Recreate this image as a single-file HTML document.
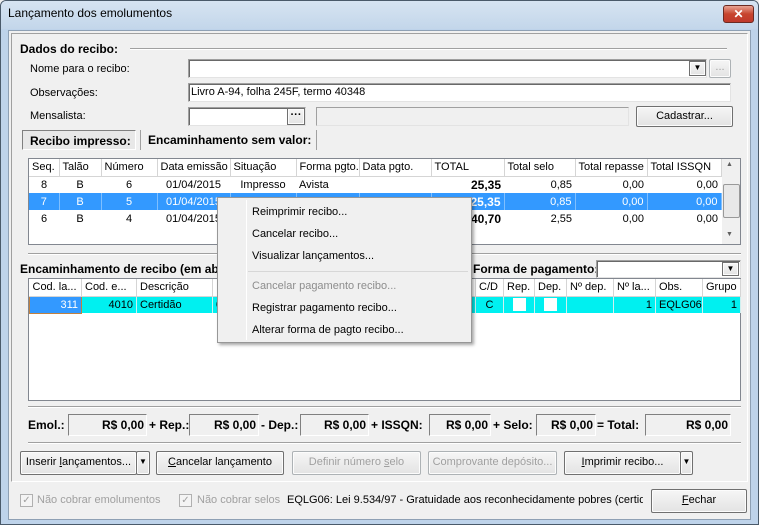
<!DOCTYPE html>
<html><head><meta charset="utf-8"><style>
*{box-sizing:border-box;margin:0;padding:0}
body{width:759px;height:525px;overflow:hidden;font-family:"Liberation Sans",sans-serif;font-size:11px;color:#000;background:#f0f0f0;position:relative}
.a{position:absolute;white-space:nowrap}
.b{font-weight:bold;font-size:12px}
.in{position:absolute;background:#fff;border:1px solid #a0a0a0;border-right-color:#e3e3e3;border-bottom-color:#e3e3e3;box-shadow:inset 1px 1px 0 #696969}
.btn{position:absolute;background:linear-gradient(#f6f6f6,#e3e3e3);border:1px solid #707070;text-align:center;line-height:20px;border-radius:2px;box-shadow:inset 0 0 0 1px #fcfcfc}
.dis{color:#a0a0a0;border-color:#adb2b5}
.tb{position:absolute;background:#f0f0f0;border:1px solid #808080;border-right-color:#fff;border-bottom-color:#fff;text-align:right;font-weight:bold;font-size:12px;padding:3px 2px 0 0}
table{border-collapse:collapse;position:absolute;table-layout:fixed}
td{height:17px;padding:0 3px;overflow:hidden;white-space:nowrap}
.h td{background:#fff;border-right:1px solid #d5d5d5;border-bottom:1px solid #d5d5d5;height:17px}
.r{text-align:right}.c{text-align:center}
.sel td{background:#3399ff;color:#fff;border-right:1px solid #7fbfff}
.cy td{background:#00f0f0;border-right:1px solid #d0f0f0}
.line{position:absolute;height:2px;border-top:1px solid #a0a0a0;border-bottom:1px solid #fff}
.mi{position:absolute;left:34px}
</style></head><body>
<!-- window frame -->
<div class="a" style="left:0;top:0;width:759px;height:525px;border:1px solid #4a5a6a;border-radius:6px 6px 0 0;background:#bed3ea"></div>
<div class="a" style="left:1px;top:1px;width:757px;height:28px;background:linear-gradient(#d6e4f2,#c3d6ea);border-radius:5px 5px 0 0"></div>
<div class="a" style="left:8px;top:6px;font-size:12px">Lançamento dos emolumentos</div>
<div class="a" style="left:723px;top:5px;width:31px;height:18px;border:1px solid #6b2a22;border-radius:3px;background:linear-gradient(#e8a494,#c7452e 50%,#c0392b);color:#fff;font-weight:bold;font-size:12px;text-align:center;line-height:16px">✕</div>
<div class="a" style="left:8px;top:30px;width:743px;height:490px;background:#f0f0f0;border:1px solid #8ea0b4"></div>
<!-- inner panel -->
<div class="a" style="left:11px;top:33px;width:737px;height:449px;border:1px solid #fff;border-left-color:#a0a0a0;border-top-color:#a0a0a0"></div>
<div class="a b" style="left:20px;top:42px">Dados do recibo:</div>
<div class="line" style="left:130px;top:48px;width:597px"></div>
<div class="a" style="left:30px;top:63px">Nome para o recibo:</div>
<div class="in" style="left:188px;top:59px;width:519px;height:19px"></div>
<div class="btn" style="left:689px;top:61px;width:17px;height:15px;line-height:12px;font-size:8px;border-radius:0">▼</div>
<div class="btn dis" style="left:709px;top:59px;width:22px;height:19px;line-height:14px">...</div>
<div class="a" style="left:30px;top:87px">Observações:</div>
<div class="in" style="left:188px;top:83px;width:543px;height:19px"></div>
<div class="a" style="left:191px;top:86px">Livro A-94, folha 245F, termo 40348</div>
<div class="a" style="left:30px;top:110px">Mensalista:</div>
<div class="in" style="left:188px;top:107px;width:118px;height:19px"></div>
<div class="btn" style="left:287px;top:108px;width:18px;height:17px;line-height:12px;border-radius:0;font-weight:bold">···</div>
<div class="in" style="left:316px;top:107px;width:313px;height:19px;background:#f0f0f0;box-shadow:none"></div>
<div class="btn" style="left:636px;top:106px;width:97px;height:21px;line-height:18px">Cadastrar...</div>
<!-- tabs -->
<div class="a b" style="left:22px;top:130px;width:114px;height:20px;border:1px solid #808080;border-right-color:#fff;border-bottom-color:#fff;background:#e8e8e8;padding:3px 0 0 7px">Recibo impresso:</div>
<div class="a" style="left:140px;top:130px;width:1px;height:20px;background:#a0a0a0"></div>
<div class="a b" style="left:148px;top:133px">Encaminhamento sem valor:</div>
<div class="a" style="left:316px;top:130px;width:1px;height:20px;background:#a0a0a0"></div>
<!-- grid1 -->
<div class="a" style="left:28px;top:158px;width:713px;height:87px;background:#fff;border:1px solid #828790"></div>
<table style="left:29px;top:159px;width:692px">
<colgroup><col style="width:30px"><col style="width:42px"><col style="width:56px"><col style="width:73px"><col style="width:66px"><col style="width:63px"><col style="width:72px"><col style="width:73px"><col style="width:71px"><col style="width:72px"><col style="width:74px"></colgroup>
<tr class="h"><td>Seq.</td><td>Talão</td><td>Número</td><td>Data emissão</td><td>Situação</td><td>Forma pgto.</td><td>Data pgto.</td><td>TOTAL</td><td>Total selo</td><td>Total repasse</td><td>Total ISSQN</td></tr>
<tr><td class="c">8</td><td class="c">B</td><td class="c">6</td><td class="c">01/04/2015</td><td class="c">Impresso</td><td>Avista</td><td></td><td class="r b">25,35</td><td class="r">0,85</td><td class="r">0,00</td><td class="r">0,00</td></tr>
<tr class="sel"><td class="c">7</td><td class="c">B</td><td class="c">5</td><td class="c">01/04/2015</td><td></td><td></td><td></td><td class="r b">25,35</td><td class="r">0,85</td><td class="r">0,00</td><td class="r">0,00</td></tr>
<tr><td class="c">6</td><td class="c">B</td><td class="c">4</td><td class="c">01/04/2015</td><td></td><td></td><td></td><td class="r b">40,70</td><td class="r">2,55</td><td class="r">0,00</td><td class="r">0,00</td></tr>
</table>
<div class="a" style="left:722px;top:159px;width:18px;height:85px;background:#f0f0f0"></div>
<div class="a" style="left:726px;top:161px;font-size:7px;color:#606060">▲</div>
<div class="a" style="left:723px;top:184px;width:17px;height:34px;background:#e8e8e8;border:1px solid #999;border-radius:2px"></div>
<div class="a" style="left:726px;top:231px;font-size:7px;color:#606060">▼</div>
<div class="line" style="left:28px;top:253px;width:713px"></div>
<!-- section 2 -->
<div class="a b" style="left:20px;top:262px">Encaminhamento de recibo (em aberto):</div>
<div class="a b" style="left:473px;top:262px;background:#f0f0f0;width:123px;overflow:hidden">Forma de pagamento:</div>
<div class="in" style="left:596px;top:260px;width:145px;height:18px"></div>
<div class="btn" style="left:722px;top:262px;width:17px;height:14px;line-height:12px;font-size:8px;border-radius:0">▼</div>
<div class="a" style="left:28px;top:278px;width:713px;height:123px;background:#fff;border:1px solid #828790"></div>
<table style="left:29px;top:279px;width:711px">
<colgroup><col style="width:52px"><col style="width:55px"><col style="width:76px"><col style="width:263px"><col style="width:28px"><col style="width:31px"><col style="width:32px"><col style="width:47px"><col style="width:42px"><col style="width:47px"><col style="width:38px"></colgroup>
<tr class="h"><td>Cod. la...</td><td>Cod. e...</td><td>Descrição</td><td></td><td>C/D</td><td>Rep.</td><td>Dep.</td><td>Nº dep.</td><td>Nº la...</td><td>Obs.</td><td>Grupo</td></tr>
<tr class="cy"><td class="r" style="background:#3399ff;color:#fff;border:1px solid #c08040">311</td><td class="r">4010</td><td>Certidão</td><td>0</td><td class="c">C</td><td class="c"><span style="display:inline-block;width:13px;height:13px;background:#fff;vertical-align:middle"></span></td><td class="c"><span style="display:inline-block;width:13px;height:13px;background:#fff;vertical-align:middle"></span></td><td></td><td class="r">1</td><td>EQLG06</td><td class="r">1</td></tr>
</table>
<div class="line" style="left:28px;top:406px;width:713px"></div>
<!-- totals -->
<div class="a b" style="left:28px;top:418px">Emol.:</div>
<div class="tb" style="left:68px;top:414px;width:79px;height:22px">R$ 0,00</div>
<div class="a b" style="left:149px;top:418px">+ Rep.:</div>
<div class="tb" style="left:189px;top:414px;width:70px;height:22px">R$ 0,00</div>
<div class="a b" style="left:261px;top:418px">- Dep.:</div>
<div class="tb" style="left:300px;top:414px;width:69px;height:22px">R$ 0,00</div>
<div class="a b" style="left:371px;top:418px">+ ISSQN:</div>
<div class="tb" style="left:429px;top:414px;width:62px;height:22px">R$ 0,00</div>
<div class="a b" style="left:493px;top:418px">+ Selo:</div>
<div class="tb" style="left:536px;top:414px;width:60px;height:22px">R$ 0,00</div>
<div class="a b" style="left:597px;top:418px">= Total:</div>
<div class="tb" style="left:645px;top:414px;width:86px;height:22px">R$ 0,00</div>
<div class="line" style="left:28px;top:442px;width:713px"></div>
<!-- buttons -->
<div class="btn" style="left:20px;top:451px;width:117px;height:24px">Inserir <u>l</u>ançamentos...</div>
<div class="btn" style="left:136px;top:451px;width:14px;height:24px;font-size:8px">▼</div>
<div class="btn" style="left:156px;top:451px;width:128px;height:24px"><u>C</u>ancelar lançamento</div>
<div class="btn dis" style="left:292px;top:451px;width:129px;height:24px">Definir número <u>s</u>elo</div>
<div class="btn dis" style="left:428px;top:451px;width:129px;height:24px">Comprovante depósito...</div>
<div class="btn" style="left:564px;top:451px;width:117px;height:24px"><u>I</u>mprimir recibo...</div>
<div class="btn" style="left:680px;top:451px;width:13px;height:24px;font-size:8px">▼</div>
<!-- bottom -->
<div class="a" style="left:20px;top:494px;width:13px;height:13px;border:1px solid #b0b0b0;background:#f4f4f4;color:#a0a0a0;font-size:10px;line-height:11px;text-align:center">✓</div>
<div class="a" style="left:37px;top:494px;color:#a0a0a0">Não cobrar emolumentos</div>
<div class="a" style="left:179px;top:494px;width:13px;height:13px;border:1px solid #b0b0b0;background:#f4f4f4;color:#a0a0a0;font-size:10px;line-height:11px;text-align:center">✓</div>
<div class="a" style="left:197px;top:494px;color:#a0a0a0">Não cobrar selos</div>
<div class="a" style="left:287px;top:494px;width:356px;overflow:hidden">EQLG06: Lei 9.534/97 - Gratuidade aos reconhecidamente pobres (certidões)</div>
<div class="btn" style="left:651px;top:489px;width:96px;height:24px"><u>F</u>echar</div>
<!-- context menu -->
<div class="a" style="left:217px;top:197px;width:255px;height:146px;background:#f0f0f0;border:1px solid #979797;box-shadow:2px 2px 3px rgba(0,0,0,.35)">
<div class="a" style="left:28px;top:2px;width:1px;height:140px;background:#e2e2e2;border-right:1px solid #fff"></div>
<div class="mi" style="top:8px">Reimprimir recibo...</div>
<div class="mi" style="top:30px">Cancelar recibo...</div>
<div class="mi" style="top:52px">Visualizar lançamentos...</div>
<div class="a" style="left:30px;top:73px;width:220px;height:1px;background:#d7d7d7"></div>
<div class="mi" style="top:82px;color:#8d8d8d">Cancelar pagamento recibo...</div>
<div class="mi" style="top:104px">Registrar pagamento recibo...</div>
<div class="mi" style="top:126px">Alterar forma de pagto recibo...</div>
</div>
</body></html>
